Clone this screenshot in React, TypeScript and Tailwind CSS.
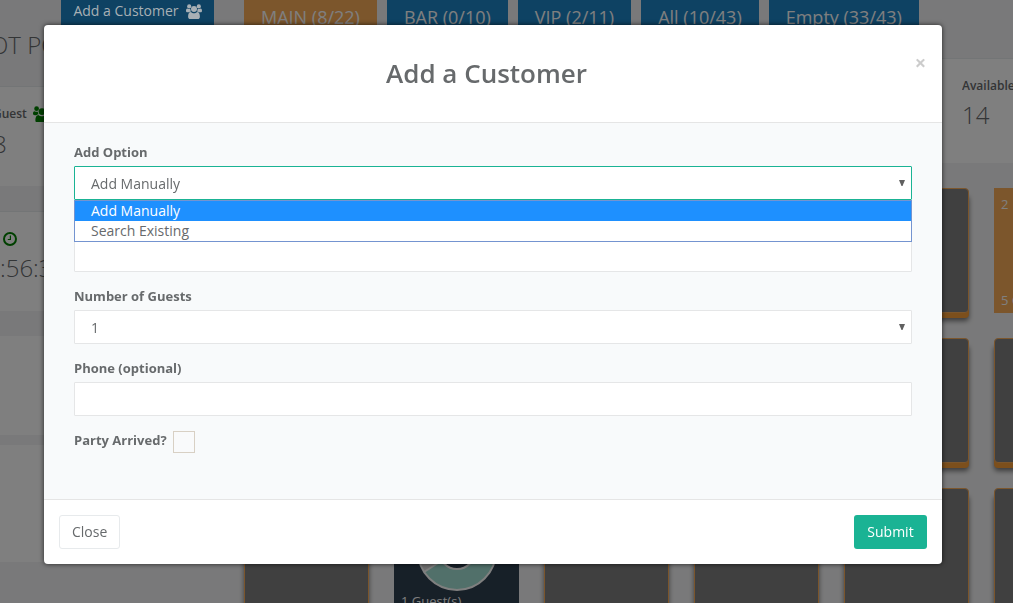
import { useState } from "react";

const tabs = [
  { label: "MAIN (8/22)", active: true },
  { label: "BAR (0/10)", active: false },
  { label: "VIP (2/11)", active: false },
  { label: "All (10/43)", active: false },
  { label: "Empty (33/43)", active: false },
];

const addOptions = [
  { value: "manual", label: "Add Manually" },
  { value: "search", label: "Search Existing" },
];

const tableRows = [
  [8, 9, 10, 11, 12, 13],
  [14, 15, 16, 17, 18, 19],
  [20, 21, 22, 23, 24, 25],
];

const fieldClass =
  "block h-[34px] w-full appearance-none rounded-[1px] border bg-white text-sm text-[#676a6c] outline-none";
const labelClass = "mb-[5px] block text-[13px] leading-[18px] font-bold";

const GroupIcon = ({ className }: { className?: string }) => (
  <svg viewBox="0 0 16 15" fill="currentColor" className={className}>
    <circle cx="3.2" cy="2.4" r="2.1" />
    <circle cx="12.8" cy="2.4" r="2.1" />
    <path d="M1.4 4.6C2.4 5.2 3.6 5.2 4.3 5C4.3 6 4.6 6.8 5.1 7.4C4.2 7.4 3.6 7.7 3.1 8.2H1.6C0.6 8.2 0 7.7 0 6.9C0 5.9 0.3 4.6 1.4 4.6Z" />
    <path d="M14.6 4.6C13.6 5.2 12.4 5.2 11.7 5C11.7 6 11.4 6.8 10.9 7.4C11.8 7.4 12.4 7.7 12.9 8.2H14.4C15.4 8.2 16 7.7 16 6.9C16 5.9 15.7 4.6 14.6 4.6Z" />
    <circle cx="8" cy="4.9" r="3" />
    <path d="M4.9 8C5.8 8.9 6.9 9.2 8 9.2C9.1 9.2 10.2 8.9 11.1 8C13 8 13.9 10 13.9 12.7C13.9 14.2 13 15 11.7 15H4.3C3 15 2.1 14.2 2.1 12.7C2.1 10 3 8 4.9 8Z" />
  </svg>
);

const ClockIcon = ({ className }: { className?: string }) => (
  <svg
    viewBox="0 0 14 14"
    fill="none"
    stroke="currentColor"
    className={className}
  >
    <circle cx="7" cy="7" r="6" strokeWidth="2" />
    <path d="M7.4 3.6V7.5H4.8" strokeWidth="1.2" />
  </svg>
);

const Donut = () => (
  <svg width="84" height="84" viewBox="-42 -42 84 84" className="mx-auto">
    <circle r="39" fill="#a3e1d4" />
    <path d="M0 0 L-33 21 A39 39 0 0 1 0 -39 Z" fill="#dedede" />
    <path d="M0 0L-33 21" stroke="#fff" strokeWidth="2" />
    <circle r="39" fill="none" stroke="#fff" strokeWidth="2" />
    <circle r="18" fill="#2f4050" stroke="#fff" strokeWidth="2" />
  </svg>
);

const TableTile = ({ number }: { number: number }) => {
  if (number === 13) {
    return (
      <div className="flex h-[125px] w-[125px] shrink-0 flex-col justify-between bg-[#f8ac59] px-[7px] pt-[6px] pb-[3px] text-[13px] leading-5 text-white">
        <span>2</span>
        <span className="whitespace-nowrap">5 Guest(s)</span>
      </div>
    );
  }
  if (number === 21) {
    return (
      <div className="h-[125px] w-[125px] shrink-0 bg-[#2f4050] px-[7px] pt-[21px] text-[13px] leading-4 text-white">
        <Donut />
        1 Guest(s)
      </div>
    );
  }
  return (
    <div className="h-[125px] w-[125px] shrink-0 rounded-[4px] border border-[#f8ac59] bg-[#808080] pt-[46px] text-center text-[28px] leading-9 text-[#f8ac59] shadow-[0_5px_0_#f89e38,0_8px_5px_rgba(0,0,0,0.5)]">
      {number}
    </div>
  );
};

const Arrow = () => (
  <svg
    width="6"
    height="6"
    viewBox="0 0 6 6"
    className="pointer-events-none absolute top-[14px] right-[7px]"
    fill="#606060"
  >
    <path d="M0 0H6L3.5 6H2.5Z" />
  </svg>
);

const Dashboard = () => (
  <div className="flex h-screen overflow-hidden bg-[#f3f3f4]">
    <aside className="w-[214px] shrink-0">
      <div className="flex justify-end">
        {/* stays brighter than the dimmed page */}
        <button className="relative z-10 flex h-[25px] w-[153px] items-center justify-center gap-[7px] bg-[#0e4263] pb-[3px] text-sm text-[#a8b0b5]">
          Add a Customer <GroupIcon className="w-4" />
        </button>
      </div>
      <h2 className="-ml-2.5 h-[61px] text-2xl leading-10 font-light">
        OT POT
      </h2>
      <section className="h-[100px] border-t border-[#e7eaec] bg-white pt-[18px]">
        <h5 className="-ml-[7px] flex items-center gap-1.5 text-xs leading-[18px] font-semibold">
          Guest <GroupIcon className="w-[18px] text-[#008000]" />
        </h5>
        <p className="-ml-[7px] pt-[3px] text-2xl leading-9 font-light">8</p>
      </section>
      <section className="mt-[25px] h-[100px] border-t border-[#e7eaec] bg-white pt-[20px]">
        <h5 className="pl-[3px]">
          <ClockIcon className="w-[14px] text-[#008000]" />
        </h5>
        <p className="pt-1 text-2xl leading-9 font-light">:56:32</p>
      </section>
      <section className="mt-[25px] h-[99px] bg-white" />
      <section className="mt-[10px] h-[117px] bg-white" />
    </aside>

    <main className="min-w-0 flex-1 pl-[30px]">
      <nav className="flex h-[58px] gap-[10px]">
        {tabs.map((tab) => (
          <button
            key={tab.label}
            className={`h-[34px] shrink-0 px-[17px] text-lg text-white ${
              tab.active ? "bg-[#f8ac59]" : "bg-[#1c84c6]"
            }`}
          >
            {tab.label}
          </button>
        ))}
      </nav>
      <section className="flex h-[105px] justify-end border-t border-[#e7eaec] bg-white pt-[18px]">
        <div className="w-[51px] overflow-hidden whitespace-nowrap">
          <h5 className="text-xs leading-[18px] font-semibold">Available</h5>
          <p className="pt-0.5 text-2xl leading-9 font-light">14</p>
        </div>
      </section>
      <div className="flex flex-col pt-[25px]">
        {tableRows.map((row) => (
          <div key={row[0]} className="flex h-[150px] shrink-0">
            {row.map((number) => (
              <div key={number} className="w-[150px] shrink-0">
                <TableTile number={number} />
              </div>
            ))}
          </div>
        ))}
      </div>
    </main>
  </div>
);

const CustomerModal = () => {
  const [option, setOption] = useState("manual");
  const [open, setOpen] = useState(true);

  return (
    <div
      role="dialog"
      aria-labelledby="modal-title"
      className="mt-[25px] mr-[71px] ml-11 rounded-[4px] bg-white shadow-[0_0_5px_rgba(0,0,0,0.7)]"
    >
      <header className="flex h-[98px] items-start border-b border-[#e5e5e5] px-[15px] pt-[30px]">
        <h4
          id="modal-title"
          className="flex-1 text-center text-[26px] leading-9 font-semibold"
        >
          Add a Customer
        </h4>
        <button
          aria-label="Close dialog"
          className="w-[13px] text-xl leading-4 font-bold text-[#ccc]"
        >
          ×
        </button>
      </header>

      <form className="h-[376px] bg-[#f8fafb] px-[30px] pt-5">
        <div className="mb-[15px]">
          <label htmlFor="add-option" className={labelClass}>
            Add Option
          </label>
          <div className="relative">
            <select
              id="add-option"
              value={option}
              onChange={(e) => setOption(e.target.value)}
              className={`${fieldClass} border-[#1ab394] px-4 pt-0.5`}
            >
              {addOptions.map((o) => (
                <option key={o.value} value={o.value}>
                  {o.label}
                </option>
              ))}
            </select>
            <Arrow />
            {open && (
              <ul
                role="listbox"
                aria-label="Add Option"
                className="absolute inset-x-0 top-full border border-[#7494d0] bg-white text-sm leading-5"
              >
                {addOptions.map((o) => (
                  <li
                    key={o.value}
                    role="option"
                    aria-selected={o.value === option}
                    onClick={() => {
                      setOption(o.value);
                      setOpen(false);
                    }}
                    className={`px-4 ${
                      o.value === option ? "bg-[#1e90ff] text-white" : ""
                    }`}
                  >
                    {o.label}
                  </li>
                ))}
              </ul>
            )}
          </div>
        </div>
        <div className="mb-[15px]">
          <label
            htmlFor="name"
            className={`${labelClass} ${open ? "invisible" : ""}`}
          >
            Name
          </label>
          <input
            id="name"
            type="text"
            className={`${fieldClass} border-[#e5e6e7] px-3`}
          />
        </div>
        <div className="mb-[15px]">
          <label htmlFor="guests" className={labelClass}>
            Number of Guests
          </label>
          <div className="relative">
            <select
              id="guests"
              className={`${fieldClass} border-[#e5e6e7] px-4 pt-0.5`}
            >
              <option>1</option>
              <option>2</option>
              <option>3</option>
              <option>4</option>
            </select>
            <Arrow />
          </div>
        </div>
        <div className="mb-[15px]">
          <label htmlFor="phone" className={labelClass}>
            Phone (optional)
          </label>
          <input
            id="phone"
            type="tel"
            className={`${fieldClass} border-[#e5e6e7] px-3`}
          />
        </div>
        <div className="flex items-start gap-1.5">
          <label htmlFor="arrived" className={labelClass}>
            Party Arrived?
          </label>
          <input
            id="arrived"
            type="checkbox"
            className="h-[22px] w-[22px] appearance-none border border-[#d8d0c4] bg-[#f9fafb] checked:bg-[#1ab394]"
          />
        </div>
      </form>

      <footer className="flex justify-between border-t border-[#e5e5e5] p-[15px] text-sm">
        <button className="h-[34px] rounded-[3px] border border-[#e7eaec] bg-white px-3">
          Close
        </button>
        <button className="h-[34px] min-w-[73px] rounded-[3px] bg-[#1ab394] px-3 font-medium text-white">
          Submit
        </button>
      </footer>
    </div>
  );
};

const App = () => (
  <div className="font-['Open_Sans',sans-serif] text-[#676a6c]">
    <Dashboard />
    <div className="fixed inset-0 bg-black/50" />
    <div className="fixed inset-0 z-20 overflow-hidden">
      <CustomerModal />
    </div>
  </div>
);

export default App;
